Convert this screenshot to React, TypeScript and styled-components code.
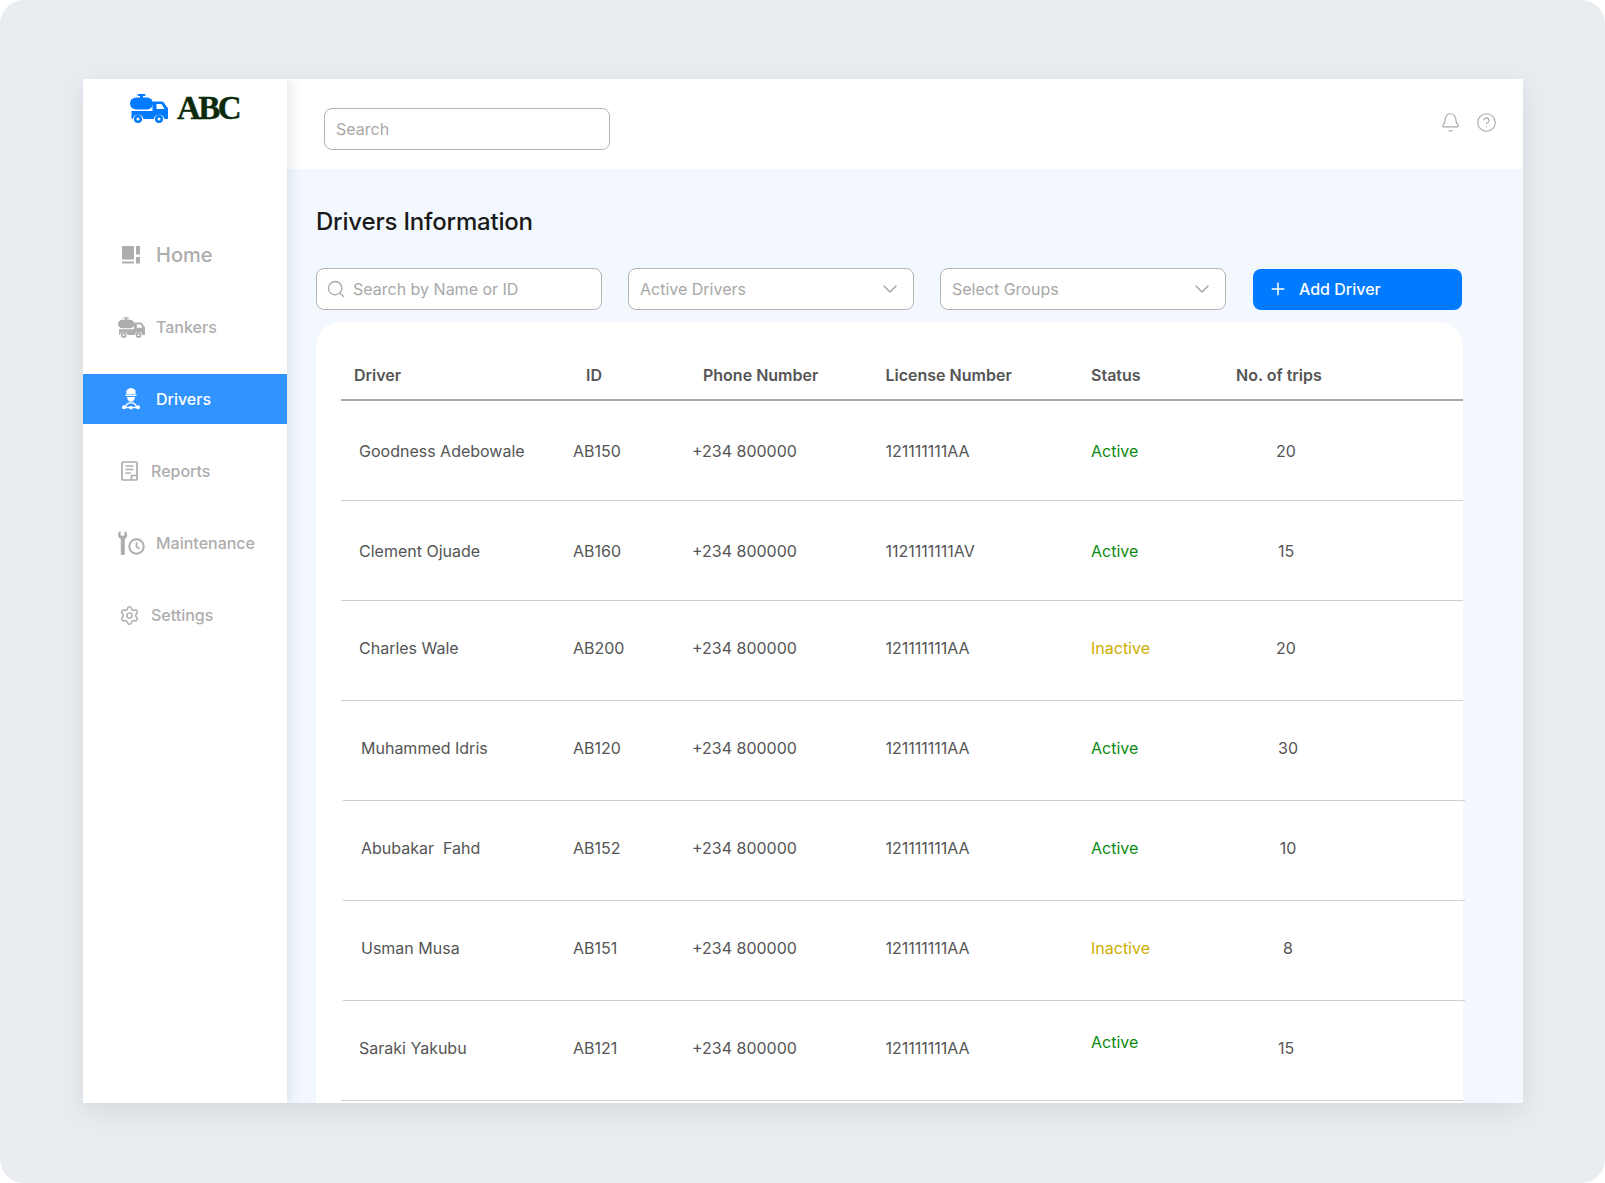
import React from "react";
import styled, { createGlobalStyle } from "styled-components";
import { Bell, ChevronDown, CircleHelp, Plus, Search, Settings } from "lucide-react";

const Global = createGlobalStyle`
  html, body { margin: 0; padding: 0; background: #ffffff; }
  body { font-family: "Inter", "Noto Sans", sans-serif; }
  * { box-sizing: border-box; }
`;

const Page = styled.div`
  width: 1605px;
  height: 1183px;
  padding: 79px 82px 80px 83px;
  background: #e9edf1;
  border-radius: 24px;
  overflow: hidden;
`;

const Frame = styled.div`
  display: flex;
  width: 1440px;
  height: 1024px;
  overflow: hidden;
  box-shadow: 0 8px 24px rgba(60, 70, 80, 0.12);
`;

const Sidebar = styled.aside`
  position: relative;
  z-index: 2;
  width: 204px;
  flex: none;
  background: #ffffff;
  box-shadow: 4px 0 10px rgba(60, 80, 110, 0.12);
`;

const Logo = styled.div`
  display: flex;
  align-items: center;
  gap: 9px;
  height: 151px;
  padding: 0 0 92px 47px;
`;

const LogoText = styled.span`
  font-family: "Liberation Serif", serif;
  font-weight: 700;
  font-size: 33px;
  line-height: 1;
  letter-spacing: -2.6px;
  color: #0b2a0b;
  -webkit-text-stroke: 0.4px #0b2a0b;
`;

const Nav = styled.nav`
  display: flex;
  flex-direction: column;
  gap: 22px;
`;

const NavItem = styled.a<{ $active?: boolean; $large?: boolean }>`
  display: flex;
  align-items: center;
  height: 50px;
  padding-left: 34px;
  font-size: ${(p) => (p.$large ? "20px" : "16px")};
  font-weight: 500;
  color: ${(p) => (p.$active ? "#ffffff" : "#adadad")};
  background: ${(p) => (p.$active ? "#3093ff" : "transparent")};
`;

const NavIcon = styled.span<{ $slot: number }>`
  display: flex;
  align-items: center;
  justify-content: center;
  flex: none;
  width: ${(p) => p.$slot}px;
  margin-right: ${(p) => (p.$slot === 28 ? 11 : 10)}px;
`;

const Main = styled.div`
  flex: 1;
  display: flex;
  flex-direction: column;
  min-width: 0;
  background: #f3f8fe;
`;

const Topbar = styled.header`
  display: flex;
  align-items: flex-start;
  justify-content: space-between;
  height: 90px;
  padding: 29px 26px 0 37px;
  background: #ffffff;
`;

const Field = styled.div<{ $width?: number; $top?: boolean }>`
  display: flex;
  align-items: center;
  width: ${(p) => p.$width ?? 286}px;
  height: 42px;
  padding: 0 11px;
  flex: none;
  background: #ffffff;
  border: 1px solid #b5b5b5;
  border-radius: 8px;
  font-size: 16px;
  color: #a8a8a8;
`;

const FieldLabel = styled.span`
  flex: 1;
`;

const SearchIcon = styled(Search)`
  flex: none;
  margin: 0 7px 0 -2px;
`;

const TopIcons = styled.div`
  display: flex;
  align-items: center;
  gap: 15px;
  padding-top: 4px;
  color: #a8a8a8;
`;

const Content = styled.main`
  flex: 1;
  padding: 39px 0 0 29px;
  min-height: 0;
`;

const Title = styled.h1`
  margin: 0;
  height: 28px;
  font-size: 24px;
  line-height: 28px;
  font-weight: 500;
  letter-spacing: -0.2px;
  color: #1a1a1a;
`;

const Filters = styled.div`
  display: flex;
  align-items: center;
  margin-top: 32px;
  width: 1147px;
`;

const FilterGap = styled.div<{ $w: number }>`
  width: ${(p) => p.$w}px;
  flex: none;
`;

const AddButton = styled.button`
  display: flex;
  align-items: center;
  gap: 11px;
  width: 209px;
  height: 41px;
  padding: 0 14px 0 15px;
  border: 0;
  border-radius: 8px;
  background: #007aff;
  color: #ffffff;
  font-family: inherit;
  font-size: 16px;
  font-weight: 500;
`;

const Card = styled.section`
  margin-top: 12px;
  width: 1147px;
  height: 781px;
  padding-left: 25px;
  background: #ffffff;
  border-radius: 24px 24px 0 0;
`;

const Grid = styled.div`
  display: grid;
  grid-template-columns: 232px 119px 193.5px 205.5px 145px 1fr;
  align-items: center;
`;

const Head = styled(Grid)`
  height: 79px;
  padding-top: 29px;
  border-bottom: 2px solid #a9a9a9;
  font-size: 16px;
  font-weight: 600;
  color: #555555;
`;

const HeadCell = styled.span<{ $pad?: number; $left?: number }>`
  padding-left: ${(p) => p.$pad ?? 0}px;
  margin-left: ${(p) => p.$left ?? 0}px;
  white-space: nowrap;
`;

const Row = styled(Grid)<{ $lift?: boolean }>`
  height: 99px;
  padding-bottom: ${(p) => (p.$lift ? "6px" : "0")};
  font-size: 16px;
  font-weight: 400;
  color: #555555;
`;

const Name = styled.span<{ $pad: number }>`
  padding-left: ${(p) => p.$pad}px;
  white-space: pre;
`;

const Status = styled.span<{ $on: boolean; $high?: boolean }>`
  color: ${(p) => (p.$on ? "#0d8a12" : "#cdae00")};
  margin-bottom: ${(p) => (p.$high ? "12px" : "0")};
`;

const Trips = styled.span<{ $shift: number }>`
  width: 100px;
  text-align: center;
  margin-left: ${(p) => p.$shift}px;
`;

const Rule = styled.div<{ $shift?: number }>`
  height: 1px;
  margin-left: ${(p) => p.$shift ?? 0}px;
  margin-right: ${(p) => -(p.$shift ?? 0)}px;
  background: #cfcfcf;
`;

const TankerIcon = ({ color, w, h }: { color: string; w: number; h: number }) => (
  <svg width={w} height={h} viewBox="0 0 38 29" fill={color}>
    <rect x="7.5" y="0" width="8" height="2" rx="1" />
    <rect x="10" y="1" width="3" height="3" />
    <rect x="0" y="3.5" width="23" height="12" rx="6" />
    <path fillRule="evenodd" d="M1.5 17h21V7.5h9.5a2 2 0 0 1 1.7.9L37 13a2 2 0 0 1 1 1.7V24a1 1 0 0 1-1 1h-2.6a5.4 5.4 0 0 0-10.6 0H13.4a5.4 5.4 0 0 0-10.6 0H2.5a1 1 0 0 1-1-1zM26.5 10v5h8l-3-5z" />
    <path fillRule="evenodd" d="M8 21a4 4 0 1 1 0 8 4 4 0 0 1 0-8zm0 2.5a1.5 1.5 0 1 0 0 3 1.5 1.5 0 0 0 0-3zM29 21a4 4 0 1 1 0 8 4 4 0 0 1 0-8zm0 2.5a1.5 1.5 0 1 0 0 3 1.5 1.5 0 0 0 0-3z" />
  </svg>
);

const HomeIcon = () => (
  <svg width="18" height="18" viewBox="0 0 18 18" fill="#adadad">
    <rect x="0" y="0" width="12" height="13.5" />
    <rect x="0" y="15.5" width="12" height="2" />
    <rect x="14" y="0" width="4" height="8.5" />
    <rect x="14" y="11" width="4" height="6.5" />
  </svg>
);

const DriverIcon = () => (
  <svg width="18" height="22" viewBox="0 0 18 22" fill="#ffffff">
    <path d="M4.5 2.5C5.5 1 7.5 0 9 0s3.5 1 4.5 2.5V6h-9z" />
    <rect x="3.5" y="6.5" width="11" height="1.5" />
    <path d="M5 9h8c0 2.6-1.6 4.8-4 4.8S5 11.600 5 9z" />
    <path d="M3.600 20c0-3.200 2.200-5.200 5.400-5.200s5.400 2 5.400 5.200" fill="none" stroke="#ffffff" strokeWidth="1.300" />
    <circle cx="2" cy="19.300" r="2" />
    <circle cx="16" cy="19.300" r="2" />
    <circle cx="9" cy="19.800" r="1.800" />
    <rect x="2" y="18.800" width="14" height="1.400" />
  </svg>
);

const ReportIcon = () => (
  <svg width="17" height="20" viewBox="0 0 17 20" fill="none" stroke="#adadad" strokeWidth="1.700">
    <rect x="1" y="1" width="15" height="18" rx="1" />
    <path d="M4.500 5h8M4.500 8.500h8M4.500 12h5M10.500 19v-4.500H16" />
  </svg>
);

const MaintenanceIcon = () => (
  <svg width="27" height="24" viewBox="0 0 27 24">
    <path fill="#adadad" d="M2.600 0v4l2 1.300 2-1.300V0c1.500.6 2.600 2.200 2.600 4 0 1.800-1 3.300-2.400 4v15.500a.8.8 0 0 1-.8.500H3.600a.8.800 0 0 1-.8-.500V8C1 7.300 0 5.800 0 4 0 2.200 1.100.6 2.600 0z" />
    <circle cx="18.500" cy="15.500" r="7.200" fill="none" stroke="#adadad" strokeWidth="2" />
    <path d="M18.500 11.200v4.600l3 2" fill="none" stroke="#adadad" strokeWidth="1.700" />
  </svg>
);

type Item = { label: string; slot: number; icon: React.ReactNode; active?: boolean; large?: boolean };

const navItems: Item[] = [
  { label: "Home", slot: 28, icon: <HomeIcon />, large: true },
  { label: "Tankers", slot: 28, icon: <TankerIcon color="#adadad" w={27} h={21} /> },
  { label: "Drivers", slot: 28, icon: <DriverIcon />, active: true },
  { label: "Reports", slot: 24, icon: <ReportIcon /> },
  { label: "Maintenance", slot: 28, icon: <MaintenanceIcon /> },
  { label: "Settings", slot: 24, icon: <Settings size={21} color="#adadad" strokeWidth={1.7} /> },
];

type Driver = {
  name: string;
  id: string;
  license: string;
  on: boolean;
  trips: number;
  pad: number;
  trip: number;
  lift?: boolean;
  high?: boolean;
  rule?: number;
};

const drivers: Driver[] = [
  { name: "Goodness Adebowale", id: "AB150", license: "121111111AA", on: true, trips: 20, pad: 18, trip: 0 },
  { name: "Clement Ojuade", id: "AB160", license: "1121111111AV", on: true, trips: 15, pad: 18, trip: 0 },
  { name: "Charles Wale", id: "AB200", license: "121111111AA", on: false, trips: 20, pad: 18, trip: 0, lift: true },
  { name: "Muhammed Idris", id: "AB120", license: "121111111AA", on: true, trips: 30, pad: 20, trip: 2, lift: true, rule: 2 },
  { name: "Abubakar  Fahd", id: "AB152", license: "121111111AA", on: true, trips: 10, pad: 20, trip: 2, lift: true, rule: 2 },
  { name: "Usman Musa", id: "AB151", license: "121111111AA", on: false, trips: 8, pad: 20, trip: 2, lift: true, rule: 2 },
  { name: "Saraki Yakubu", id: "AB121", license: "121111111AA", on: true, trips: 15, pad: 18, trip: 0, lift: true, high: true },
];

export default function App() {
  return (
    <Page>
      <Global />
      <Frame>
        <Sidebar>
          <Logo>
            <TankerIcon color="#007aff" w={38} h={29} />
            <LogoText>ABC</LogoText>
          </Logo>
          <Nav>
            {navItems.map((n) => (
              <NavItem key={n.label} $active={n.active} $large={n.large}>
                <NavIcon $slot={n.slot}>{n.icon}</NavIcon>
                {n.label}
              </NavItem>
            ))}
          </Nav>
        </Sidebar>
        <Main>
          <Topbar>
            <Field>
              <FieldLabel>Search</FieldLabel>
            </Field>
            <TopIcons>
              <Bell size={21} strokeWidth={1.3} />
              <CircleHelp size={21} strokeWidth={1.3} />
            </TopIcons>
          </Topbar>
          <Content>
            <Title>Drivers Information</Title>
            <Filters>
              <Field>
                <SearchIcon size={20} strokeWidth={1.6} />
                <FieldLabel>Search by Name or ID</FieldLabel>
              </Field>
              <FilterGap $w={26} />
              <Field>
                <FieldLabel>Active Drivers</FieldLabel>
                <ChevronDown size={24} strokeWidth={1.5} />
              </Field>
              <FilterGap $w={26} />
              <Field>
                <FieldLabel>Select Groups</FieldLabel>
                <ChevronDown size={24} strokeWidth={1.5} />
              </Field>
              <FilterGap $w={27} />
              <AddButton>
                <Plus size={20} strokeWidth={1.8} />
                Add Driver
              </AddButton>
            </Filters>
            <Card>
              <Head>
                <HeadCell $pad={13}>Driver</HeadCell>
                <HeadCell $pad={13}>ID</HeadCell>
                <HeadCell $pad={11}>Phone Number</HeadCell>
                <HeadCell>License Number</HeadCell>
                <HeadCell>Status</HeadCell>
                <HeadCell>No. of trips</HeadCell>
              </Head>
              {drivers.map((d) => (
                <React.Fragment key={d.name}>
                  <Row $lift={d.lift}>
                    <Name $pad={d.pad}>{d.name}</Name>
                    <span>{d.id}</span>
                    <span>+234 800000</span>
                    <span>{d.license}</span>
                    <Status $on={d.on} $high={d.high}>
                      {d.on ? "Active" : "Inactive"}
                    </Status>
                    <Trips $shift={d.trip}>{d.trips}</Trips>
                  </Row>
                  <Rule $shift={d.rule} />
                </React.Fragment>
              ))}
            </Card>
          </Content>
        </Main>
      </Frame>
    </Page>
  );
}
